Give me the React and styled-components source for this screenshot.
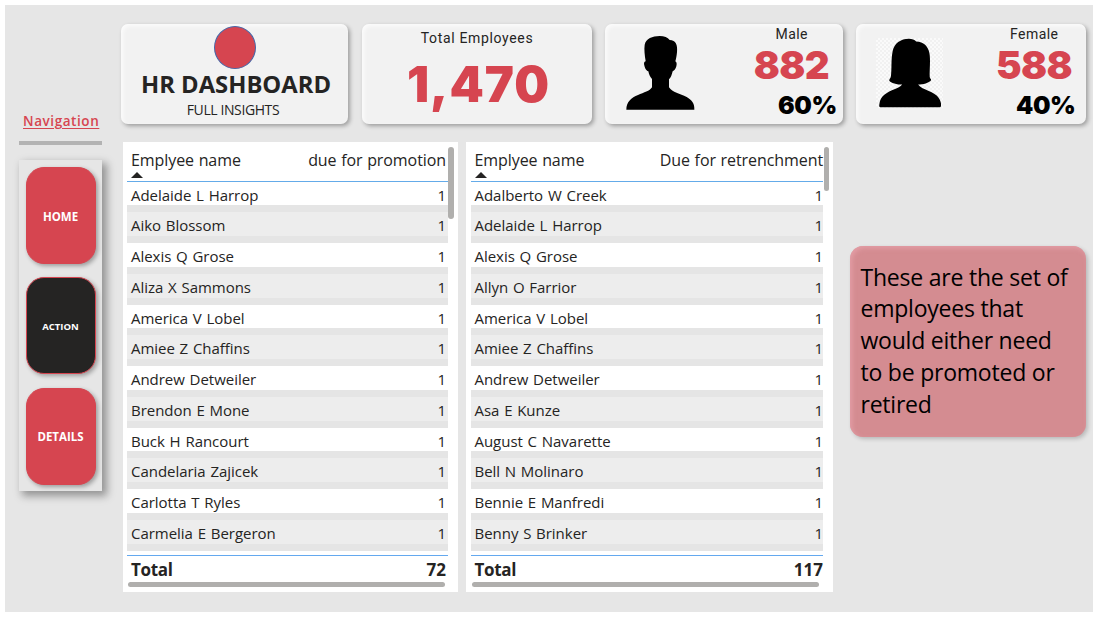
import React from "react";
import styled, { createGlobalStyle, css } from "styled-components";

const red = "#d64550";
const ink = "#252423";
const segoe = `"Open Sans", "Noto Sans", sans-serif`;

const Global = createGlobalStyle`
  * { box-sizing: border-box; }
  body { margin: 0; background: #fff; font-family: ${segoe}; color: ${ink}; overflow: hidden; }
`;

const Page = styled.main`
  width: 1088px;
  height: 607px;
  margin: 5px 2px 5px 5px;
  background: #e6e6e6;
  display: grid;
  grid-template-columns: 97px 965px;
  column-gap: 19px;
  padding-top: 19px;
  white-space: nowrap;
`;

const Sidebar = styled.nav`
  padding: 87px 0 0 14px;
  display: flex;
  flex-direction: column;
`;

const NavTitle = styled.a`
  height: 20px;
  margin-left: 4px;
  font-size: 13.5px;
  line-height: 20px;
  font-weight: 600;
  letter-spacing: 0.57px;
  color: ${red};
  text-decoration: underline;
  text-underline-offset: 2px;
`;

const Divider = styled.div`
  width: 83px;
  height: 4px;
  margin: 10px 0 15px;
  background: #b3b3b3;
  flex: none;
`;

const NavPanel = styled.div`
  width: 83px;
  height: 331px;
  flex: none;
  padding: 7px 6.5px 0;
  display: flex;
  flex-direction: column;
  gap: 13.3px;
  background: #e6e6e6;
  box-shadow: 4px 4px 8px 1px rgba(0, 0, 0, 0.36);
`;

const NavButton = styled.button`
  height: 97px;
  width: 70px;
  padding: 1px 0 0;
  flex: none;
  border: 1px solid ${red};
  border-radius: 18px;
  background: ${(p) => (p.$active ? ink : red)};
  box-shadow: 2px 2px 4px rgba(0, 0, 0, 0.32);
  color: #fff;
  font-family: ${segoe};
  font-weight: 700;
  font-size: ${(p) => p.$size}px;
`;

const Content = styled.div`
  display: flex;
  flex-direction: column;
  gap: 19px;
`;

const CardRow = styled.header`
  display: grid;
  grid-template-columns: 227px 230px 237.5px 230px;
  column-gap: 13.5px;
  height: 99px;
`;

const cardFace = css`
  border-radius: 7px;
  background: #f2f2f2;
  box-shadow: 2px 2px 4px rgba(0, 0, 0, 0.32), inset 2px 2px 4px rgba(255, 255, 255, 0.75);
`;

const TitleCard = styled.section`
  ${cardFace}
  display: flex;
  flex-direction: column;
  align-items: center;
  padding-top: 2px;
`;

const Dot = styled.div`
  width: 42px;
  height: 43px;
  border: 1px solid #4767a8;
  border-radius: 50%;
  background: ${red};
`;

const Title = styled.h1`
  margin: 0;
  padding-left: 3px;
  height: 30px;
  line-height: 31px;
  font-size: 23.8px;
  font-weight: 700;
`;

const Subtitle = styled.div`
  font-size: 14px;
  line-height: 21px;
  padding-right: 3px;
  letter-spacing: -0.4px;
`;

const TotalCard = styled.section`
  ${cardFace}
  display: flex;
  flex-direction: column;
  align-items: center;
  padding-left: 1px;
`;

const CardLabel = styled.div`
  font-family: Roboto, sans-serif;
  font-size: 14px;
  line-height: 20px;
  letter-spacing: 0.45px;
  padding-right: ${(p) => p.$right || 0}px;
`;

const TotalLabel = styled(CardLabel)`
  margin-top: 4px;
  letter-spacing: 0.66px;
`;

const Figure = styled.div`
  font-family: Inter, sans-serif;
  font-weight: 900;
  font-size: ${(p) => p.$size}px;
  line-height: ${(p) => p.$line}px;
  letter-spacing: ${(p) => p.$track || 0}px;
  padding-right: ${(p) => p.$right || 0}px;
  color: ${(p) => p.$color || red};
`;

const TotalFigure = styled(Figure)`
  padding-left: 3px;
`;

const GenderCard = styled.section`
  ${cardFace}
  display: flex;
  justify-content: space-between;
  padding: ${(p) => p.$pad};
`;

const Portrait = styled.div`
  padding-top: ${(p) => p.$top}px;
`;

const GenderStats = styled.div`
  display: flex;
  flex-direction: column;
  align-items: flex-end;
`;

const Checker = styled.div`
  width: 67px;
  height: 70px;
  background: repeating-conic-gradient(#fafafa 0 25%, #f1f1f1 0 50%) 0 0 / 4px 4px;
`;

const Main = styled.div`
  display: flex;
  align-items: flex-start;
  padding-left: 1.5px;
`;

const TablePanel = styled.section`
  position: relative;
  width: ${(p) => p.$width}px;
  height: 449.5px;
  margin-right: ${(p) => p.$gap}px;
  padding-left: 4.5px;
  background: #fff;
`;

const Table = styled.div`
  width: ${(p) => p.$width}px;
  display: flex;
  flex-direction: column;
`;

const Head = styled.div`
  height: 39.5px;
  border-bottom: 1px solid #64abe9;
  padding: 6px ${(p) => p.$right}px 0 4px;
`;

const HeadLabels = styled.div`
  display: flex;
  justify-content: space-between;
  font-size: 16px;
  line-height: 24px;
  letter-spacing: -0.08px;
  word-spacing: 0.6px;
`;

const SortArrow = styled.div`
  width: 0;
  border: 6px solid transparent;
  border-top: 0;
  border-bottom: 6px solid ${ink};
`;

const Row = styled.div`
  height: 30.75px;
  padding: 0 ${(p) => p.$right}px 0 4px;
  display: flex;
  justify-content: space-between;
  border-bottom: 7.5px solid #e5e5e5;
  background: ${(p) => (p.$alt ? "#ededed" : "#fff")};
  font-size: 15px;
  line-height: 26px;
  letter-spacing: -0.03px;
  word-spacing: 0.9px;
`;

const TotalRow = styled.div`
  height: 27px;
  margin-top: 4px;
  padding: 0 ${(p) => p.$right}px 0 4px;
  display: flex;
  justify-content: space-between;
  border-top: 1px solid #64a9ef;
  font-size: 17px;
  font-weight: 700;
  line-height: 28px;
`;

const TotalLabelCell = styled.span`
  letter-spacing: -0.3px;
`;

const HBar = styled.div`
  width: ${(p) => p.$width}px;
  height: 5.5px;
  margin-left: 1px;
  border-radius: 3px;
  background: #b0afad;
`;

const VBar = styled.div`
  position: absolute;
  top: 4.5px;
  right: 4px;
  width: 5.5px;
  height: ${(p) => p.$height}px;
  border-radius: 3px;
  background: #b0afad;
`;

const Note = styled.aside`
  width: 236px;
  height: 191px;
  margin-top: 104px;
  padding: 15.5px 0 0 10.5px;
  border-radius: 13px;
  background: #d48c91;
  box-shadow: 2px 2px 4px rgba(0, 0, 0, 0.2), inset 2px 2px 5px rgba(230, 160, 168, 0.9);
  color: #000;
  font-size: 23px;
  letter-spacing: -0.22px;
  line-height: 31.8px;
`;

const ManIcon = () => (
  <svg width="68.7" height="74" viewBox="80 78 206 222">
    <path d="M81 299C81 276 96 263 116 255C134 247 151 244 158 232L158 207C152 201 149 194 147 184C139 182 136 172 134 162C134 157 136 155 139 154C136 136 134 118 136 104C140 86 159 78 181 78C195 78 205 82 211 90C230 90 235 106 233 126C232 137 230 147 228 154C232 156 233 161 231 169C229 177 225 182 220 184C217 195 215 202 209 208L209 232C219 247 242 251 262 261C278 270 286 281 285 299Z" />
  </svg>
);

const WomanIcon = () => (
  <svg width="67" height="70" viewBox="92 85 202 210">
    <path d="M105 293C100 293 102 286 103 279C107 260 122 250 140 242C153 237 165 233 171 225C156 225 136 220 132 213C131 209 136 207 137 200C140 179 137 151 142 125C147 101 166 87 191 87C201 87 208 90 213 95C236 96 249 109 253 130C257 151 253 181 254 202C255 208 259 207 258 212C252 220 234 225 219 225C225 234 238 239 251 244C271 252 285 262 288 282C288 288 289 293 285 293Z" />
  </svg>
);

const promotion = [
  "Adelaide L Harrop", "Aiko Blossom", "Alexis Q Grose", "Aliza X Sammons",
  "America V Lobel", "Amiee Z Chaffins", "Andrew Detweiler", "Brendon E Mone",
  "Buck H Rancourt", "Candelaria Zajicek", "Carlotta T Ryles", "Carmelia E Bergeron",
];

const retrenchment = [
  "Adalberto W Creek", "Adelaide L Harrop", "Alexis Q Grose", "Allyn O Farrior",
  "America V Lobel", "Amiee Z Chaffins", "Andrew Detweiler", "Asa E Kunze",
  "August C Navarette", "Bell N Molinaro", "Bennie E Manfredi", "Benny S Brinker",
];

function EmployeeTable({ names, label, total, width, inner, gap, bar, thumb, right }) {
  return (
    <TablePanel $width={width} $gap={gap}>
      <Table $width={inner}>
        <Head $right={right}>
          <HeadLabels><span>Emplyee name</span><span>{label}</span></HeadLabels>
          <SortArrow />
        </Head>
        {names.map((name, i) => (
          <Row key={name} $alt={i % 2 === 1} $right={right}>
            <span>{name}</span><span>1</span>
          </Row>
        ))}
        <TotalRow $right={right}>
          <TotalLabelCell>Total</TotalLabelCell><span>{total}</span>
        </TotalRow>
        <HBar $width={bar} />
      </Table>
      <VBar $height={thumb} />
    </TablePanel>
  );
}

export default function App() {
  return (
    <>
      <Global />
      <Page>
        <Sidebar>
          <NavTitle>Navigation</NavTitle>
          <Divider />
          <NavPanel>
            <NavButton $size={11.5}>HOME</NavButton>
            <NavButton $size={9.5} $active>ACTION</NavButton>
            <NavButton $size={11.5}>DETAILS</NavButton>
          </NavPanel>
        </Sidebar>
        <Content>
          <CardRow>
            <TitleCard>
              <Dot />
              <Title>HR DASHBOARD</Title>
              <Subtitle>FULL INSIGHTS</Subtitle>
            </TitleCard>
            <TotalCard>
              <TotalLabel>Total Employees</TotalLabel>
              <TotalFigure $size={49} $line={74} $track={1}>1,470</TotalFigure>
            </TotalCard>
            <GenderCard $pad="0 5.5px 0 21px">
              <Portrait $top={12}><ManIcon /></Portrait>
              <GenderStats>
                <CardLabel $right={29}>Male</CardLabel>
                <Figure $size={38.5} $line={43} $track={-0.6} $right={8}>882</Figure>
                <Figure $size={24.7} $line={37} $track={-0.3} $color="#000">60%</Figure>
              </GenderStats>
            </GenderCard>
            <GenderCard $pad="0 10.5px 0 20px">
              <Portrait $top={14}><Checker><WomanIcon /></Checker></Portrait>
              <GenderStats>
                <CardLabel $right={17}>Female</CardLabel>
                <Figure $size={38.5} $line={43} $track={-0.6} $right={3.5}>588</Figure>
                <Figure $size={24.7} $line={37} $track={-0.4} $color="#000">40%</Figure>
              </GenderStats>
            </GenderCard>
          </CardRow>
          <Main>
            <EmployeeTable names={promotion} label="due for promotion" total="72"
              width={335} inner={321} gap={8.5} bar={317} thumb={72} right={2} />
            <EmployeeTable names={retrenchment} label="Due for retrenchment" total="117"
              width={367} inner={352.5} gap={17} bar={347} thumb={44} right={0} />
            <Note>
              These are the set of<br />employees that<br />would either need<br />to be promoted or<br />retired
            </Note>
          </Main>
        </Content>
      </Page>
    </>
  );
}
